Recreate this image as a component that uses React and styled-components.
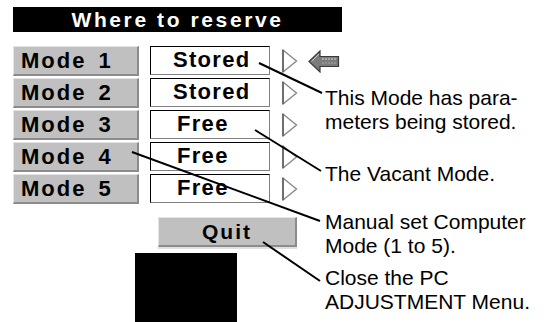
import React from 'react';
import styled, { createGlobalStyle } from 'styled-components';

const modes = [
  { name: 'Mode 1', value: 'Stored', pad: 22, current: true },
  { name: 'Mode 2', value: 'Stored', pad: 22 },
  { name: 'Mode 3', value: 'Free', pad: 26 },
  { name: 'Mode 4', value: 'Free', pad: 26 },
  { name: 'Mode 5', value: 'Free', pad: 26 },
];

const notes = [
  { top: 79, lines: ['This Mode has para-', 'meters being stored.'] },
  { top: 28, lines: ['The Vacant Mode.'] },
  { top: 24, lines: ['Manual set Computer', 'Mode (1 to 5).'] },
  { top: 8, lines: ['Close the PC', 'ADJUSTMENT Menu.'] },
];

// leader lines from the menu to each note
const leaders = [
  [259, 63, 322, 93],
  [255, 130, 321, 171],
  [132, 152, 320, 221],
  [263, 242, 320, 281],
];

const Global = createGlobalStyle`
  body {
    margin: 0;
    background: #fff;
    font-family: "Liberation Sans", Arial, sans-serif;
  }
`;

const Page = styled.div`
  position: relative;
  display: flex;
  width: 546px;
  height: 322px;
  padding: 7px 0 0 13px;
  box-sizing: border-box;
  overflow: hidden;
`;

const Menu = styled.div`
  display: flex;
  flex-direction: column;
  width: 312px;
  flex-shrink: 0;
`;

const TitleBar = styled.div`
  width: 329px;
  height: 25px;
  background: #000;
  color: #fff;
  font-weight: bold;
  font-size: 21px;
  letter-spacing: 2.6px;
  line-height: 26px;
  text-align: center;
  white-space: nowrap;
`;

const ModeList = styled.div`
  display: flex;
  flex-direction: column;
  gap: 2px;
  margin-top: 14px;
`;

const Row = styled.div`
  display: flex;
  align-items: flex-start;
  width: 340px;
  height: 30px;
  white-space: nowrap;
`;

const ModeLabel = styled.div`
  flex: 0 0 126px;
  height: 30px;
  box-sizing: border-box;
  background: #c0c0c0;
  border-top: 1px solid #e4e4e4;
  border-left: 1px solid #e4e4e4;
  border-right: 2px solid #8c8c8c;
  border-bottom: 2px solid #8c8c8c;
  padding-left: 7px;
  font-weight: bold;
  font-size: 22px;
  letter-spacing: 2px;
  word-spacing: 4px;
  line-height: 28px;
`;

const ValueBox = styled.div`
  flex: 0 0 120px;
  height: 29px;
  margin-left: 11px;
  box-sizing: border-box;
  background: #fff;
  border-top: 1px solid #000;
  border-left: 1px solid #000;
  border-right: 1px solid #808080;
  border-bottom: 1px solid #808080;
  padding-left: ${(p) => p.$pad}px;
  font-weight: bold;
  font-size: 22px;
  letter-spacing: 1.3px;
  line-height: 25px;
`;

const Pointer = styled.svg`
  margin: 3px 0 0 12px;
  flex-shrink: 0;
`;

const Marker = styled.svg`
  margin: 4px 0 0 10px;
  flex-shrink: 0;
`;

const QuitButton = styled.div`
  width: 139px;
  height: 31px;
  margin: 13px 0 0 145px;
  box-sizing: border-box;
  background: #c0c0c0;
  border-top: 1px solid #e4e4e4;
  border-left: 1px solid #e4e4e4;
  border-right: 2px solid #8c8c8c;
  border-bottom: 2px solid #8c8c8c;
  box-shadow: 0 2px 0 #e0e0e0;
  font-weight: bold;
  font-size: 21px;
  letter-spacing: 2px;
  line-height: 27px;
  text-align: center;
`;

const Screen = styled.div`
  width: 102px;
  height: 80px;
  margin: 6px 0 0 122px;
  background: #000;
`;

const Notes = styled.div`
  display: flex;
  flex-direction: column;
`;

const Note = styled.div`
  margin-top: ${(p) => p.$top}px;
  font-size: 21px;
  line-height: 24px;
  color: #000;
  white-space: nowrap;
`;

const Leaders = styled.svg`
  position: absolute;
  left: 0;
  top: 0;
  pointer-events: none;
`;

const Triangle = () => (
  <Pointer width="16" height="24" viewBox="0 0 16 24">
    <polygon points="1,1 14.5,12 1,23" fill="#fff" stroke="#8a8a8a" strokeWidth="1.4" />
    <line x1="1" y1="1" x2="1" y2="23" stroke="#555" strokeWidth="1.4" />
  </Pointer>
);

const BackArrow = () => (
  <Marker width="32" height="23" viewBox="0 0 32 23">
    <polygon
      points="1,11.5 12,1 12,6.5 30.5,6.5 30.5,16.5 12,16.5 12,22"
      fill="#7c7c7c"
      stroke="#3a3a3a"
      strokeWidth="1.2"
    />
    <line x1="3.5" y1="11.5" x2="11" y2="4" stroke="#c8c8c8" strokeWidth="1" />
    <line x1="14" y1="9" x2="29" y2="9" stroke="#d0d0d0" strokeWidth="1" strokeDasharray="2 1" />
    <line x1="14" y1="13" x2="29" y2="13" stroke="#a8a8a8" strokeWidth="1" strokeDasharray="2 1" />
  </Marker>
);

const App = () => {
  return (
    <Page>
      <Global />
      <Menu>
        <TitleBar>Where to reserve</TitleBar>
        <ModeList>
          {modes.map((m) => (
            <Row key={m.name}>
              <ModeLabel>{m.name}</ModeLabel>
              <ValueBox $pad={m.pad}>{m.value}</ValueBox>
              <Triangle />
              {m.current && <BackArrow />}
            </Row>
          ))}
        </ModeList>
        <QuitButton>Quit</QuitButton>
        <Screen />
      </Menu>
      <Notes>
        {notes.map((n) => (
          <Note key={n.lines[0]} $top={n.top}>
            {n.lines.map((l) => (
              <div key={l}>{l}</div>
            ))}
          </Note>
        ))}
      </Notes>
      <Leaders width="546" height="322" viewBox="0 0 546 322">
        {leaders.map(([x1, y1, x2, y2]) => (
          <line key={x1 + '-' + y1} x1={x1} y1={y1} x2={x2} y2={y2} stroke="#000" strokeWidth="2" />
        ))}
      </Leaders>
    </Page>
  );
};

export default App;
